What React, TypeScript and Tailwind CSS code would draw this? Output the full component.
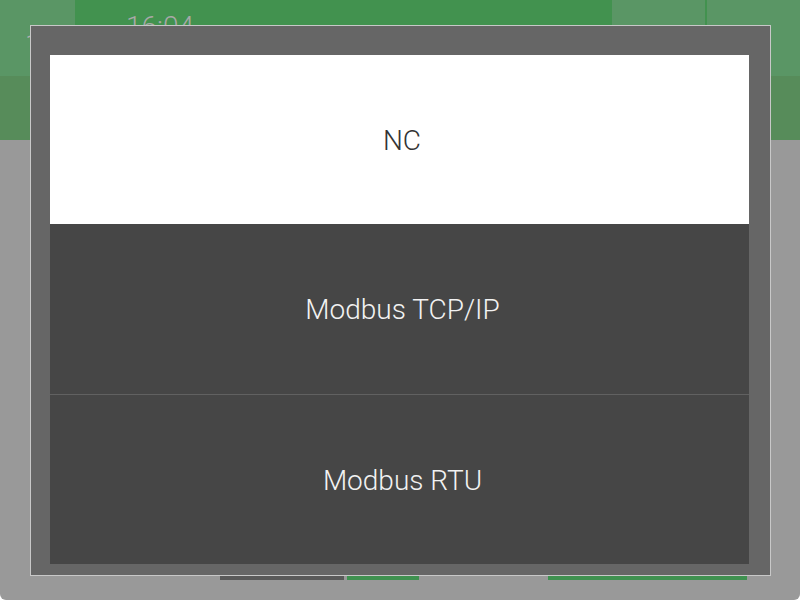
import React from "react";

const font = { fontFamily: "Roboto, 'Noto Sans', sans-serif" };

export default function App() {
  return (
    <div className="w-[800px] h-[600px] bg-white relative overflow-hidden" style={font}>
      <div className="w-full h-full bg-[#999999] rounded-b-[6px] overflow-hidden flex flex-col">
        {/* header */}
        <div className="h-[76px] flex">
          <div className="w-[75px] bg-[#5a9665] pl-[25px] pt-[31px] text-[28px] font-light text-[#b0b0b0] leading-none">1</div>
          <div className="w-[537px] bg-[#42924f] pl-[51px] pt-[13px] text-[28px] font-light text-[#a8a8a8] leading-none">16:04</div>
          <div className="w-[93px] bg-[#5a9665]" />
          <div className="w-[2px] bg-[#42924f]" />
          <div className="flex-1 bg-[#5a9665]" />
        </div>
        <div className="h-[64px] bg-[#578c5a]" />
        <div className="flex-1" />
        <div className="h-[20px] flex items-start">
          <div className="ml-[220px] mt-[-4px] w-[124px] h-[4px] bg-[#595959]" />
          <div className="ml-[3px] mt-[-4px] w-[72px] h-[4px] bg-[#3f9150]" />
          <div className="ml-[129px] mt-[-4px] w-[199px] h-[4px] bg-[#3f9150]" />
        </div>
      </div>

      {/* modal */}
      <div className="absolute left-[30px] top-[25px] w-[741px] h-[551px] border border-[#c8c8c8] bg-[#666666] pl-[19px] pr-[21px] pt-[29px] pb-[11px]">
        <div className="w-full h-full flex flex-col">
          <div className="h-[169px] bg-white flex items-center justify-center pl-[5px] pt-[2px] text-[28px] font-light text-[#333333]">
            NC
          </div>
          <div className="h-[170px] bg-[#464646] flex items-center justify-center pl-[6px] pt-[2px] text-[28px] font-light text-[#f2f2f2]">
            Modbus TCP/IP
          </div>
          <div className="h-[1px] bg-[#616161]" />
          <div className="flex-1 bg-[#464646] flex items-center justify-center pl-[6px] pt-[2px] text-[28px] font-light text-[#f2f2f2]">
            Modbus RTU
          </div>
        </div>
      </div>
    </div>
  );
}
